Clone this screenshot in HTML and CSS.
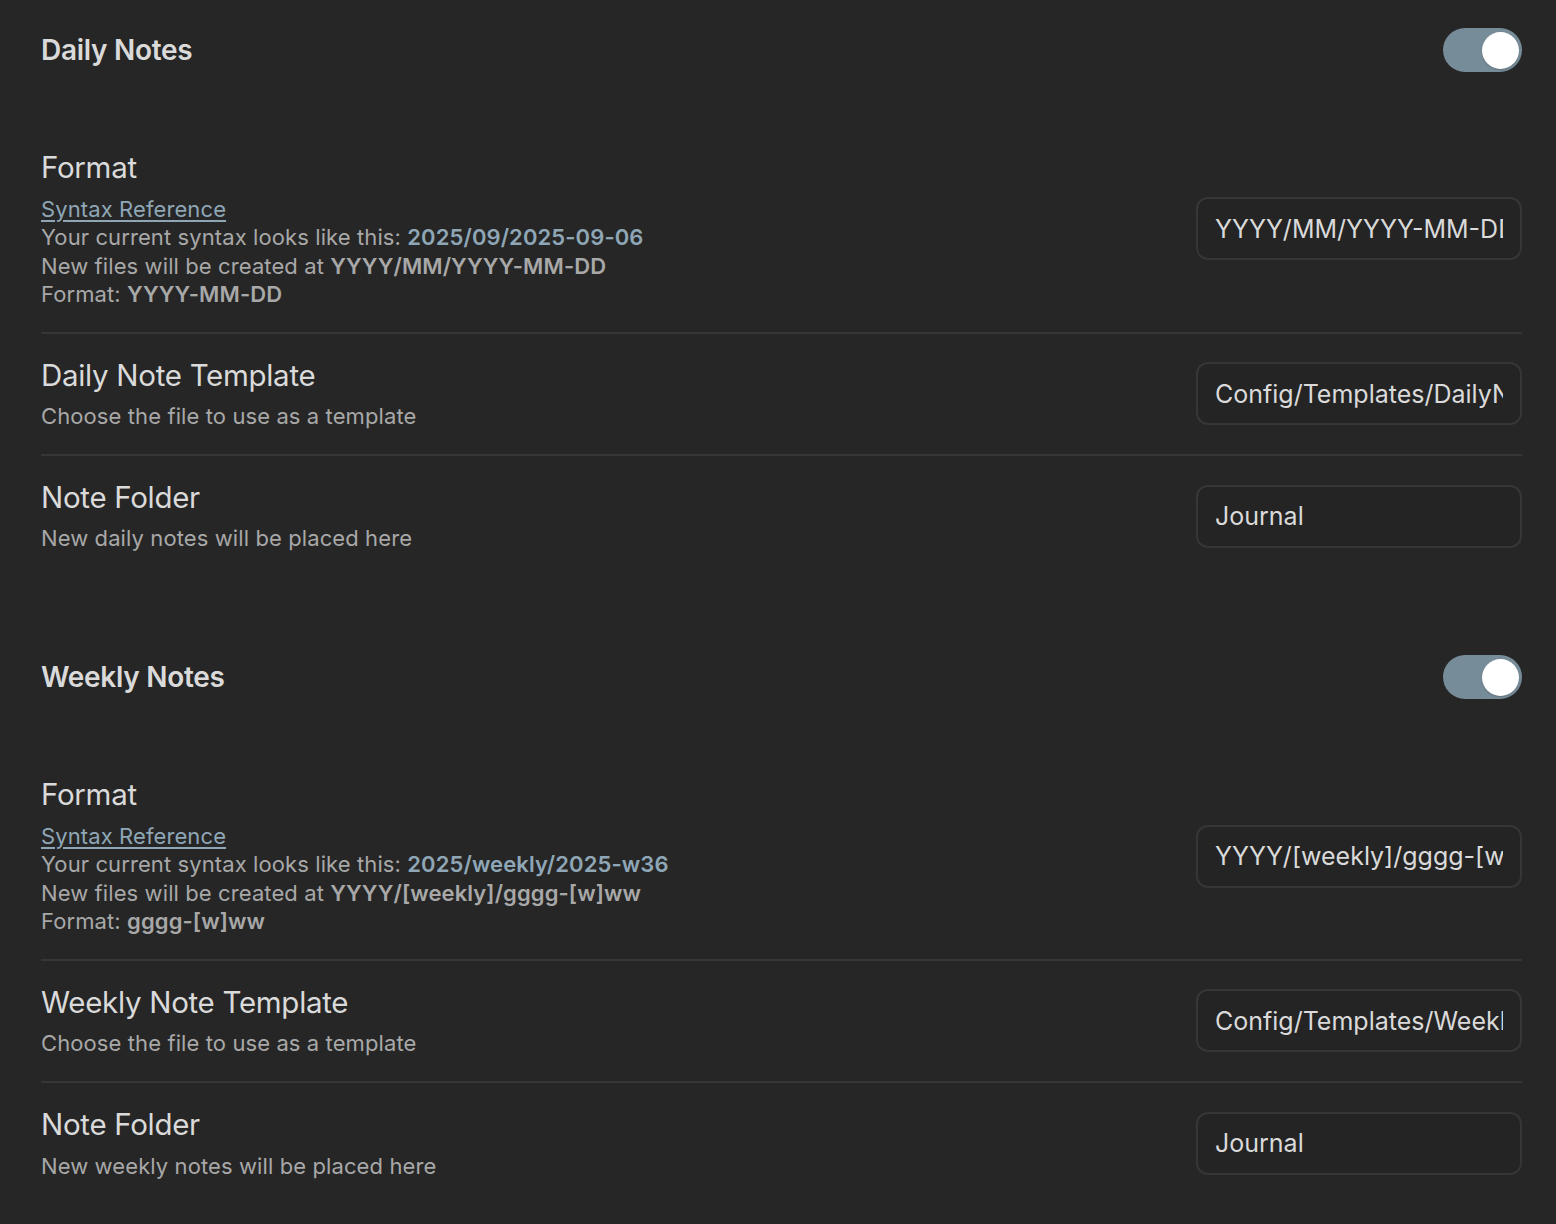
FILE: index.html
```html
<html lang="en">

<head>
  <meta charset="UTF-8">
  <meta name="viewport" content="width=device-width, initial-scale=1.0">
  <title>Periodic Notes Settings</title>
  <link rel="stylesheet" href="styles.css">
</head>

<body>
  <div id="settings">
    <section class="group">
      <div class="setting-heading">
        <div class="heading-name">Daily Notes</div>
        <div class="toggle is-enabled"><div class="knob"></div></div>
      </div>
      <div class="setting-item">
        <div class="setting-info">
          <div class="setting-name">Format</div>
          <div class="setting-desc">
            <a href="#">Syntax Reference</a><br>
            Your current syntax looks like this: <b class="accent">2025/09/2025-09-06</b><br>
            New files will be created at <b>YYYY/MM/YYYY-MM-DD</b><br>
            Format: <b>YYYY-MM-DD</b>
          </div>
        </div>
        <input type="text" class="setting-input" value="YYYY/MM/YYYY-MM-DD">
      </div>
      <div class="setting-item">
        <div class="setting-info">
          <div class="setting-name">Daily Note Template</div>
          <div class="setting-desc">Choose the file to use as a template</div>
        </div>
        <input type="text" class="setting-input" value="Config/Templates/DailyNote">
      </div>
      <div class="setting-item">
        <div class="setting-info">
          <div class="setting-name">Note Folder</div>
          <div class="setting-desc">New daily notes will be placed here</div>
        </div>
        <input type="text" class="setting-input" value="Journal">
      </div>
    </section>

    <section class="group">
      <div class="setting-heading">
        <div class="heading-name">Weekly Notes</div>
        <div class="toggle is-enabled"><div class="knob"></div></div>
      </div>
      <div class="setting-item">
        <div class="setting-info">
          <div class="setting-name">Format</div>
          <div class="setting-desc">
            <a href="#">Syntax Reference</a><br>
            Your current syntax looks like this: <b class="accent">2025/weekly/2025-w36</b><br>
            New files will be created at <b>YYYY/[weekly]/gggg-[w]ww</b><br>
            Format: <b>gggg-[w]ww</b>
          </div>
        </div>
        <input type="text" class="setting-input" value="YYYY/[weekly]/gggg-[w]ww">
      </div>
      <div class="setting-item">
        <div class="setting-info">
          <div class="setting-name">Weekly Note Template</div>
          <div class="setting-desc">Choose the file to use as a template</div>
        </div>
        <input type="text" class="setting-input" value="Config/Templates/WeeklyNote">
      </div>
      <div class="setting-item">
        <div class="setting-info">
          <div class="setting-name">Note Folder</div>
          <div class="setting-desc">New weekly notes will be placed here</div>
        </div>
        <input type="text" class="setting-input" value="Journal">
      </div>
    </section>
  </div>
</body>

</html>
```

FILE: styles.css
```css
body {
  margin: 0;
  background-color: #262626;
  color: #dadada;
  font-family: Inter, "Noto Sans", sans-serif;
}

#settings {
  padding: 28px 34px 0 41px;
}

.group + .group {
  margin-top: 79px;
}

.setting-heading {
  display: flex;
  align-items: center;
  justify-content: space-between;
  padding-bottom: 54px;
}

.heading-name {
  font-size: 28px;
  font-weight: 600;
  letter-spacing: -0.3px;
}

.toggle {
  width: 79px;
  height: 44px;
  border-radius: 22px;
  background-color: #778c99;
  display: flex;
  align-items: center;
  justify-content: flex-end;
  padding: 0 3px;
  box-sizing: border-box;
}

.knob {
  width: 37px;
  height: 37px;
  border-radius: 50%;
  background-color: #fff;
  box-shadow: 0 1px 2px rgba(0, 0, 0, 0.2);
}

.setting-item {
  display: flex;
  align-items: center;
  padding: 23px 0;
  border-top: 2px solid #363636;
}

.setting-heading + .setting-item {
  border-top: none;
}

.setting-info {
  flex: 1;
}

.setting-name {
  font-size: 29.5px;
  line-height: 37.5px;
  letter-spacing: -0.3px;
}

.setting-desc {
  padding-top: 8px;
  font-size: 22px;
  line-height: 28.6px;
  color: #a8a8a8;
  letter-spacing: 0.1px;
}

.setting-desc b {
  font-weight: 600;
}

.setting-desc .accent {
  color: #8fa6b6;
}

.setting-desc a {
  color: #8fa6b6;
  text-decoration: underline;
  text-underline-offset: 3px;
}

.setting-input {
  width: 326px;
  height: 63px;
  box-sizing: border-box;
  padding: 0 17px;
  border: 2px solid #363636;
  border-radius: 12px;
  background-color: #242424;
  color: #dadada;
  font-family: Inter, "Noto Sans", sans-serif;
  font-size: 25px;
  outline: none;
}
```
